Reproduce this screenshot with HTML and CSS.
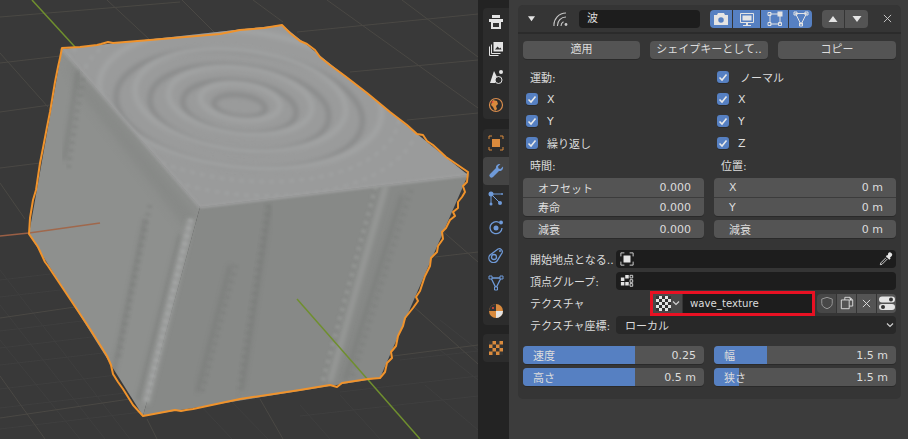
FILE: index.html
```html
<!DOCTYPE html>
<html lang="ja">
<head>
<meta charset="utf-8">
<title>波モディファイアー</title>
<link rel="stylesheet" href="styles.css">
</head>
<body>
<div class="app">
  <svg class="viewport" viewBox="0 0 478 439" width="478" height="439" aria-hidden="true">
    <defs>
      <clipPath id="faceTop"><path d="M62 49 L282 25 L468 175 L200 207Z"/></clipPath>
      <clipPath id="faceLeft"><path d="M62 49 L200 207 L143 416 L29 234Z"/></clipPath>
      <clipPath id="faceRight"><path d="M200 207 L468 175 L380 378 L143 416Z"/></clipPath>
      <filter id="b1"><feGaussianBlur stdDeviation="1"/></filter>
      <filter id="b2"><feGaussianBlur stdDeviation="2"/></filter>
      <filter id="b4"><feGaussianBlur stdDeviation="4"/></filter>
    </defs>
    <rect class="vp-bg" width="478" height="439"/>
    <g class="grid-minor">
      <path d="M0 389 L200 365M0 408 L200 384M0 429 L200 405M0 348 L100 336M0 365 L120 351M0 331 L90 320M300 416 L478 396M340 392 L478 376M400 360 L478 351M0 280 L50 274M0 297 L60 290"/>
      <path d="M0 340 L80 439M0 305 L105 439M0 270 L130 439M200 405 L232 439M230 400 L268 439M300 405 L330 439M340 395 L380 439M425 385 L478 430M440 350 L478 380M440 320 L478 350"/>
    </g>
    <g class="grid-major">
      <path d="M0 17 L180 2M0 63 L60 56M0 112 L50 105M0 168 L40 163M0 318 L75 307M0 418 L130 399M297 32 L478 14M350 72 L478 60M407 120 L478 113M435 257 L478 252M393 356 L478 345"/>
      <path d="M107 0 L150 40M182 0 L215 33M0 53 L48 107M0 183 L25 219M253 0 L283 22M327 0 L478 108M402 0 L478 57M413 306 L478 364M440 229 L478 262M260 399 L283 439M0 376 L45 439M147 419 L157 439"/>
    </g>
    <path class="axis-green" d="M32 0 L75 47"/>
    <path class="face-top" d="M62 49 L282 25 L468 175 L200 207Z"/>
    <path class="face-left" d="M62 49 L200 207 L143 416 L29 234Z"/>
    <path class="face-right" d="M200 207 L468 175 L380 378 L143 416Z"/>

    <g clip-path="url(#faceTop)">
      <g transform="rotate(7 240 103)">
        <g class="ring-dark" filter="url(#b2)">
          <ellipse cx="240" cy="106" rx="26" ry="11"/>
          <ellipse cx="240" cy="107" rx="57" ry="26"/>
          <ellipse cx="240" cy="108" rx="90" ry="42"/>
          <ellipse cx="240" cy="109" rx="124" ry="58"/>
        </g>
        <g class="ring-light" filter="url(#b2)">
          <ellipse cx="240" cy="102" rx="40" ry="18"/>
          <ellipse cx="240" cy="101" rx="72" ry="33"/>
          <ellipse cx="240" cy="100" rx="106" ry="50"/>
          <ellipse cx="240" cy="99" rx="142" ry="68"/>
        </g>
        <g class="ring-dot" filter="url(#b1)">
          <ellipse cx="240" cy="100" rx="160" ry="80"/>
          <ellipse cx="240" cy="100" rx="180" ry="94"/>
        </g>
      </g>
    </g>
    <path class="edge-light" d="M62 49 L200 207" filter="url(#b1)"/>
    <path class="edge-light" d="M200 207 L468 175" filter="url(#b1)"/>

    <g clip-path="url(#faceLeft)">
      <path class="shade-dark" d="M66 58 L196 214 L190 235 L78 90Z" filter="url(#b4)"/>
      <path class="band-dark" d="M78 70 L64 160" filter="url(#b2)"/>
      <path class="band-dotted" d="M84 70 L68 170" filter="url(#b1)"/>
      <path class="band-dark" d="M145 219 L113 375" filter="url(#b2)"/>
      <path class="band-dotted" d="M150 205 L118 360" filter="url(#b1)"/>
    </g>
    <path class="band-dark" d="M180 235 L138 400" filter="url(#b2)"/>
    <path class="band-light" d="M191 219 L146 403" filter="url(#b2)"/>
    <path class="band-chevron" d="M191 219 L146 403" filter="url(#b1)"/>
    <g clip-path="url(#faceRight)">
      <path class="band-dark" d="M230 265 L197 392" filter="url(#b2)"/>
      <path class="band-dotted" d="M236 265 L202 392" filter="url(#b1)"/>
      <path class="band-dotted" d="M268 205 L238 395" filter="url(#b1)"/>
      <path class="band-dark" d="M270 205 L242 390" filter="url(#b2)"/>
      <path class="band-soft" d="M386 185 L330 382" filter="url(#b2)"/>
      <path class="band-dark" d="M402 195 L345 380" filter="url(#b2)"/>
      <path class="band-dotted" d="M411 190 L352 378" filter="url(#b1)"/>
      <path class="band-chevron-soft" d="M376 186 L322 384" filter="url(#b1)"/>
    </g>

    <path class="axis-red" d="M0 236 L29 233"/>
    <path class="axis-red-in" d="M29 233 L100 223"/>
    <path class="axis-green" d="M297 299 L420 439"/>
    <path class="outline" d="M62 48 L80 47 L97 45 L101 44 L108 42 L113 43 L150 40 L220 34 L240 30 L264 28 L282 25 L290 33 L300 41 L307 44 L315 50 L320 57 L330 65 L345 76 L367 93 L390 112 L407 125 L417 134 L423 135 L427 141 L433 145 L446 157 L468 172 L467 182 L463 186 L465 192 L462 197 L458 202 L458 208 L453 212 L455 216 L450 220 L446 228 L442 232 L443 239 L438 246 L437 252 L431 258 L430 266 L425 276 L420 291 L416 297 L418 301 L413 308 L405 318 L403 326 L398 336 L396 346 L391 352 L392 358 L387 363 L385 372 L380 378 L368 379 L355 381 L342 383 L337 387 L330 385 L300 390 L240 399 L193 409 L186 410 L181 411 L175 410 L143 416 L133 405 L123 389 L118 382 L113 374 L111 365 L107 356 L90 329 L72 302 L48 266 L45 262 L38 247 L29 234 L30 218 L33 200 L36 190 L40 163 L43 148 L47 127 L50 112 L52 100 L55 82 L58 67 L60 58Z"/>
  </svg>

  <nav class="tabs" aria-label="プロパティタブ">
    <div class="tab-group top-group">
      <div class="tab">
        <svg viewBox="0 0 16 16"><path class="i-white" d="M4 1h8v3H4zM1 5h14v3h-2v7H3V8H1z"/><path class="i-dark" d="M5 9h6v4H5z"/></svg>
      </div>
      <div class="tab">
        <svg viewBox="0 0 16 16"><path class="i-line" d="M1.500 5.500v9h9M3.500 3.500v9h9"/><path class="i-white" d="M5.500 1h9.500v9.500H5.500z"/><path class="i-dark" d="M7 8.500l2.500-3 2 2 1-1 1 2z"/></svg>
      </div>
      <div class="tab">
        <svg viewBox="0 0 16 16"><path class="i-white" d="M6 2L10 10L7 14H2z"/><circle class="i-white" cx="13" cy="3" r="2"/><circle class="i-ring" cx="10.500" cy="11" r="3.500"/></svg>
      </div>
      <div class="tab">
        <svg viewBox="0 0 16 16"><circle class="i-world" cx="8" cy="8" r="6.500"/><path class="i-orange" d="M5 3l4 1 1 3-2 2 1 3-2 2-2-4-2-2 1-3z"/><circle class="i-redspot" cx="4.500" cy="5" r="1"/></svg>
      </div>
    </div>
    <div class="tab-group">
      <div class="tab">
        <svg viewBox="0 0 16 16"><path class="i-o-line" d="M1 4V1h3M12 1h3v3M15 12v3h-3M4 15H1v-3"/><path class="i-orange" d="M4 4h8v8H4z"/></svg>
      </div>
      <div class="tab tab-active">
        <svg viewBox="0 0 16 16"><path class="i-blue" d="M15 3.500c.6 2.500-1.400 5-4 4.500L5 14a2.100 2.100 0 0 1-3-3l6-6c-.500-2.600 2-4.600 4.500-4L10 3.500 10.500 5.500 12.500 6z"/></svg>
      </div>
      <div class="tab">
        <svg viewBox="0 0 16 16"><circle class="i-blue" cx="3" cy="3" r="2.500"/><circle class="i-blue" cx="3" cy="13" r="1.500"/><circle class="i-blue" cx="12" cy="12" r="2"/><circle class="i-blue" cx="14" cy="3" r="1"/><path class="i-b-line" d="M3 3h10M3 3v9M3 3l8 8"/></svg>
      </div>
      <div class="tab">
        <svg viewBox="0 0 16 16"><path class="i-b-line wide" d="M11 3.500A6 6 0 1 0 14 9"/><circle class="i-blue" cx="8" cy="9" r="2.500"/><circle class="i-blue" cx="13" cy="3.500" r="2"/></svg>
      </div>
      <div class="tab">
        <svg viewBox="0 0 16 16"><path class="i-b-line wide" d="M2 8L10 2a3 3 0 0 1 4 4L9 14a4 4 0 0 1-7-6z"/><circle class="i-b-line wide" cx="6" cy="10" r="2.500"/><circle class="i-blue" cx="12" cy="4" r="1"/></svg>
      </div>
      <div class="tab">
        <svg viewBox="0 0 16 16"><path class="i-b-line wide" d="M3 3h10L8 13z"/><path class="i-box" d="M1 1h3v3H1zM12 1h3v3h-3zM6.500 12h3v3h-3z"/></svg>
      </div>
      <div class="tab">
        <svg viewBox="0 0 16 16"><circle class="i-orange" cx="8" cy="8" r="7"/><path class="i-dark" d="M8 8V1A7 7 0 0 0 1 8z"/><path class="i-white" d="M8 8h7A7 7 0 0 1 8 15z"/><circle class="i-redspot" cx="5" cy="5" r="1"/></svg>
      </div>
    </div>
    <div class="tab-group">
      <div class="tab">
        <svg viewBox="0 0 16 16"><path class="i-orange" d="M1 1h14v14H1z"/><path class="i-dark" d="M1 1h3.500v3.500H1zM8 1h3.500v3.500H8zM4.500 4.500H8V8H4.500zM11.500 4.500H15V8h-3.500zM1 8h3.500v3.500H1zM8 8h3.500v3.500H8zM4.500 11.500H8V15H4.500zM11.500 11.500H15V15h-3.500z"/></svg>
      </div>
    </div>
  </nav>

  <main class="editor">
    <section class="panel">
      <header class="panel-head">
        <svg class="caret" viewBox="0 0 8 8"><path d="M0 1.500h8L4 7z"/></svg>
        <svg class="wave-icon" viewBox="0 0 16 16"><path d="M1 15A12 12 0 0 1 13 2M4.500 15A8.500 8.500 0 0 1 13 6M8 15a5 5 0 0 1 2.500-4.300"/><circle cx="13" cy="13.500" r="1.400"/></svg>
        <div class="name-field">波</div>
        <div class="toggles">
          <span class="toggle t-cam"><svg viewBox="0 0 16 16"><path class="i-white" d="M5 2h6l1 2h3v10H1V4h3z"/><circle class="i-ring-blue" cx="8" cy="9" r="3.500"/></svg></span>
          <span class="toggle t-wide"><svg viewBox="0 0 16 16"><path class="i-line" d="M1.500 2.500h13v9h-13z"/><path class="i-white" d="M3.500 4.500h9v5h-9zM7 12h2v2h3v1H4v-1h3z"/></svg></span>
          <span class="toggle t-wide"><svg viewBox="0 0 16 16"><path class="i-line" d="M3 3h9M3 3v9M13 4v9M3 13h9"/><path class="i-white" d="M10.500 .5h5v5h-5z"/><path class="i-box-w" d="M1 1.500h3v3H1zM1 11.500h3v3H1zM11.500 11.500h3v3h-3z"/></svg></span>
          <span class="toggle t-cage"><svg viewBox="0 0 16 16"><path class="i-line" d="M2.500 2.500h11L8 13.500z"/><path class="i-box-w" d="M1 1h3v3H1zM12 1h3v3h-3zM6.500 12h3v3h-3z"/></svg></span>
        </div>
        <div class="updown">
          <span class="ud"><svg viewBox="0 0 10 8"><path d="M5 1l4.500 6H.5z"/></svg></span>
          <span class="ud"><svg viewBox="0 0 10 8"><path d="M.5 1h9L5 7z"/></svg></span>
        </div>
        <svg class="close" viewBox="0 0 10 10"><path d="M1 1l8 8M9 1l-8 8"/></svg>
      </header>

      <div class="body">
        <div class="btn-row">
          <button class="btn">適用</button>
          <button class="btn">シェイプキーとして..</button>
          <button class="btn">コピー</button>
        </div>

        <div class="columns">
          <div class="col">
            <div class="line label">運動:</div>
            <label class="line check"><span class="box"><svg viewBox="0 0 12 12"><path d="M2.500 6.500l2.500 2.500 4.500-5.500"/></svg></span>X</label>
            <label class="line check"><span class="box"><svg viewBox="0 0 12 12"><path d="M2.500 6.500l2.500 2.500 4.500-5.500"/></svg></span>Y</label>
            <label class="line check"><span class="box"><svg viewBox="0 0 12 12"><path d="M2.500 6.500l2.500 2.500 4.500-5.500"/></svg></span>繰り返し</label>
            <div class="line label">時間:</div>
            <div class="fields">
              <div class="field"><span>オフセット</span><span>0.000</span></div>
              <div class="field"><span>寿命</span><span>0.000</span></div>
            </div>
            <div class="field solo"><span>減衰</span><span>0.000</span></div>
          </div>
          <div class="col col-right">
            <label class="line check"><span class="box"><svg viewBox="0 0 12 12"><path d="M2.500 6.500l2.500 2.500 4.500-5.500"/></svg></span><span class="pad2">ノーマル</span></label>
            <label class="line check"><span class="box"><svg viewBox="0 0 12 12"><path d="M2.500 6.500l2.500 2.500 4.500-5.500"/></svg></span>X</label>
            <label class="line check"><span class="box"><svg viewBox="0 0 12 12"><path d="M2.500 6.500l2.500 2.500 4.500-5.500"/></svg></span>Y</label>
            <label class="line check"><span class="box"><svg viewBox="0 0 12 12"><path d="M2.500 6.500l2.500 2.500 4.500-5.500"/></svg></span>Z</label>
            <div class="line label">位置:</div>
            <div class="fields">
              <div class="field"><span>X</span><span>0 m</span></div>
              <div class="field"><span>Y</span><span>0 m</span></div>
            </div>
            <div class="field solo"><span>減衰</span><span>0 m</span></div>
          </div>
        </div>

        <div class="props">
          <div class="prop">
            <span class="prop-label">開始地点となる..</span>
            <div class="input">
              <svg class="obj-icon" viewBox="0 0 16 16"><path class="i-line" d="M1 5V1h4M11 1h4v4M15 11v4h-4M5 15H1v-4"/><path class="i-white" d="M4 4h8v8H4z"/></svg>
              <svg class="dropper" viewBox="0 0 16 16"><path class="i-white" d="M10.500 1.500a2.500 2.500 0 0 1 4 3L12.500 6.500l.8.800-1.500 1.500-4-4L9.300 3.300l.8.800z"/><path class="i-line" d="M8 6.500L2 12.500 1.500 14.500 3.500 14 9.500 8"/></svg>
            </div>
          </div>
          <div class="prop">
            <span class="prop-label">頂点グループ:</span>
            <div class="input">
              <svg class="obj-icon" viewBox="0 0 16 16"><path class="i-white" d="M1 4h4v4H1zM1 9h4v4H1zM6 9h4v4H6zM6 1h4v4H6z"/><path class="i-box-w" d="M11.500 1.500h3v3h-3zM11.500 6.500h3v3h-3zM11.500 11h3v3h-3z"/></svg>
            </div>
          </div>
          <div class="prop">
            <span class="prop-label tex-label">テクスチャ</span>
            <div class="tex-select">
              <span class="tex-icon">
                <svg viewBox="0 0 15 15"><path class="i-white" d="M0 0h15v15H0z"/><path class="i-check" d="M0 0h3v3H0zM6 0h3v3H6zM12 0h3v3h-3zM3 3h3v3H3zM9 3h3v3H9zM0 6h3v3H0zM6 6h3v3H6zM12 6h3v3h-3zM3 9h3v3H3zM9 9h3v3H9zM0 12h3v3H0zM6 12h3v3H6zM12 12h3v3h-3z"/></svg>
                <svg class="chev" viewBox="0 0 8 8"><path d="M1 2.500l3 3 3-3"/></svg>
              </span>
              <span class="tex-name">wave_texture</span>
            </div>
            <div class="tex-tools">
              <span class="tool"><svg viewBox="0 0 16 16"><path class="i-line dim" d="M8 1.500l6 2v5c0 3-3 5-6 6-3-1-6-3-6-6v-5z"/></svg></span>
              <span class="tool"><svg viewBox="0 0 16 16"><path class="i-line" d="M5.500 4.500V1.500h6l3 3v7h-4M1.500 4.500h9v10h-9z"/><path class="i-white" d="M11 1.500l3.500 3.500H11z"/></svg></span>
              <span class="tool"><svg viewBox="0 0 10 10"><path class="i-line" d="M1 1l8 8M9 1l-8 8"/></svg></span>
              <span class="tool"><svg viewBox="0 0 16 16"><path class="i-white" d="M3 1.500h10a3 3 0 0 1 0 6H3a3 3 0 0 1 0-6zM3 9h10a3 3 0 0 1 0 6H3a3 3 0 0 1 0-6z"/><circle class="i-dark" cx="12" cy="4.500" r="2"/><circle class="i-dark" cx="4" cy="12" r="2"/></svg></span>
            </div>
          </div>
          <div class="prop">
            <span class="prop-label">テクスチャ座標:</span>
            <div class="select"><span>ローカル</span><svg class="chev" viewBox="0 0 8 8"><path d="M1 2.500l3 3 3-3"/></svg></div>
          </div>
        </div>

        <div class="sliders">
          <div class="slider"><i class="fill" style="width:112px"></i><span>速度</span><span>0.25</span></div>
          <div class="slider"><i class="fill" style="width:53px"></i><span>幅</span><span>1.5 m</span></div>
          <div class="slider"><i class="fill" style="width:112px"></i><span>高さ</span><span>0.5 m</span></div>
          <div class="slider"><i class="fill" style="width:25px"></i><span>狭さ</span><span>1.5 m</span></div>
        </div>
      </div>
    </section>
  </main>
</div>
</body>
</html>
```

FILE: styles.css
```css
* { box-sizing: border-box; }
html, body { margin: 0; height: 100%; overflow: hidden; }
body {
  font-family: "DejaVu Sans", "Noto Sans CJK JP", sans-serif;
  font-size: 11px;
  color: #dcdcdc;
  background: #3a3a3a;
}
.app { display: flex; width: 908px; height: 439px; }

/* viewport */
.viewport { display: block; flex: none; }
.vp-bg { fill: #393939; }
.grid-minor path { fill: none; stroke: #3f3f3f; stroke-width: 1; }
.grid-major path { fill: none; stroke: #4a4844; stroke-width: 1; }
.axis-green { fill: none; stroke: #6f8f2e; stroke-width: 1.5; }
.axis-red { fill: none; stroke: #9a5f45; stroke-width: 1.5; }
.axis-red-in { fill: none; stroke: #a0684c; stroke-width: 1.5; }
.face-top { fill: #9a9b9b; }
.face-left { fill: #8e908e; }
.face-right { fill: #878987; }
.ring-dark ellipse { fill: none; stroke: #8a8b8b; stroke-width: 5; }
.ring-light ellipse { fill: none; stroke: #a3a4a4; stroke-width: 5; }
.ring-dot ellipse { fill: none; stroke: #a2a3a3; stroke-width: 4; stroke-dasharray: 5 5; opacity: .5; }
.edge-light { fill: none; stroke: #9e9f9f; stroke-width: 3; }
.shade-dark { fill: #828482; opacity: .5; }
.band-dark { fill: none; stroke: #757775; stroke-width: 4; opacity: .5; }
.band-light { fill: none; stroke: #9c9e9d; stroke-width: 7; }
.band-soft { fill: none; stroke: #969896; stroke-width: 6; }
.band-dotted { fill: none; stroke: #787a78; stroke-width: 5; stroke-dasharray: 3 5; opacity: .35; }
.band-chevron { fill: none; stroke: #a9abaa; stroke-width: 5; stroke-dasharray: 3 5; opacity: .55; }
.band-chevron-soft { fill: none; stroke: #9a9c9a; stroke-width: 5; stroke-dasharray: 4 5; opacity: .55; }
.outline { fill: none; stroke: #f0932c; stroke-width: 2; stroke-linejoin: round; }

/* tab strip */
.tabs {
  flex: none;
  width: 31px;
  background: #232323;
  padding-left: 5px;
  display: flex;
  flex-direction: column;
}
.tab-group { background: #2c2c2c; border-radius: 4px 0 0 4px; margin-bottom: 9px; }
.top-group { margin-top: 8px; margin-bottom: 10px; }
.tab { height: 28px; padding-right: 1px; display: flex; align-items: center; justify-content: center; }
.top-group .tab { height: 27.67px; }
.tab svg { width: 16px; height: 16px; }
.tab-active { background: #444; border-radius: 4px 0 0 4px; }

/* icon paint */
.i-white { fill: #e4e4e4; }
.i-dark { fill: #333; }
.i-line { fill: none; stroke: #e4e4e4; stroke-width: 1; }
.i-line.dim { stroke: #a0a0a0; }
.i-ring { fill: #2c2c2c; stroke: #e4e4e4; stroke-width: 1; }
.i-ring-blue { fill: #5680c2; stroke: #e4e4e4; stroke-width: 1.5; }
.i-world { fill: #2c2c2c; stroke: #d98d4d; stroke-width: 1.2; }
.i-orange { fill: #d98a3d; }
.i-o-line { fill: none; stroke: #d98a3d; stroke-width: 1; }
.i-redspot { fill: #e84a3a; }
.i-blue { fill: #6f9ad8; }
.i-b-line { fill: none; stroke: #6f9ad8; stroke-width: 1; }
.i-b-line.wide { stroke-width: 1.3; }
.i-box { fill: #2c2c2c; stroke: #6f9ad8; stroke-width: 1; }
.i-box-w { fill: none; stroke: #e4e4e4; stroke-width: 1; }
.i-check { fill: #333; }

/* properties editor */
.editor { flex: 1; padding: 5px 7px 0 9px; background: #3c3c3c; }
.panel { width: 383px; height: 394px; background: #353535; border-radius: 5px; }
.panel-head {
  height: 29px;
  border-bottom: 2px solid #2b2b2b;
  display: flex;
  align-items: center;
}
.caret { width: 7px; height: 7px; margin-left: 10px; fill: #e4e4e4; flex: none; }
.wave-icon { width: 16px; height: 16px; margin-left: 18px; flex: none; fill: #c8c8c8; }
.wave-icon path { fill: none; stroke: #c8c8c8; stroke-width: 1.1; }
.name-field {
  width: 121px; height: 18px; margin-left: 10px; flex: none;
  background: #1d1d1d; border-radius: 4px;
  padding-left: 8px; line-height: 18px;
}
.toggles { display: flex; gap: 1px; margin-left: 10px; flex: none; }
.toggle { height: 18px; background: #5680c2; display: flex; align-items: center; justify-content: center; }
.toggle svg { width: 16px; height: 16px; }
.t-cam { width: 22px; border-radius: 4px 0 0 4px; }
.t-wide { width: 27px; }
.t-cage { width: 23px; border-radius: 0 4px 4px 0; }
.updown { display: flex; gap: 1px; margin-left: 10px; flex: none; }
.ud { width: 22px; height: 18px; background: #545454; display: flex; align-items: center; justify-content: center; }
.ud:first-child { border-radius: 4px 0 0 4px; }
.ud:last-child { width: 23px; border-radius: 0 4px 4px 0; }
.ud svg { width: 10px; height: 8px; fill: #e4e4e4; }
.close { width: 9px; height: 9px; margin-left: 15px; flex: none; fill: none; stroke: #d0d0d0; stroke-width: 1; }

.body { padding: 0 5px; }
.btn-row { display: grid; grid-template-columns: 117px 118px 118px; column-gap: 10px; padding-top: 7px; }
.btn {
  height: 18px; padding: 0; border: 0; border-radius: 4px;
  background: #545454; color: #dcdcdc;
  font: inherit; line-height: 18px;
  box-shadow: 0 1px 0 #2a2a2a;
}
.columns { display: grid; grid-template-columns: 181px 182px; column-gap: 10px; padding-top: 7px; }
.line { height: 22px; display: flex; align-items: center; }
.label { padding-left: 7px; }
.check { padding-left: 3px; }
.pad2 { padding-left: 2px; }
.box {
  width: 12px; height: 12px; margin-right: 9px; flex: none;
  background: #5680c2; border-radius: 3px;
  box-shadow: 0 1px 0 #2a2a2a;
}
.box svg { display: block; width: 12px; height: 12px; fill: none; stroke: #e8e8e8; stroke-width: 1.6; }
.fields { margin-top: 2px; border-radius: 4px; overflow: hidden; box-shadow: 0 1px 0 #2a2a2a; display: flex; flex-direction: column; }
.field {
  height: 19px; background: #545454;
  display: flex; justify-content: space-between; align-items: center;
  padding: 0 13px 0 15px;
}
.fields .field + .field { border-top: 1px solid #3c3c3c; }
.field.solo { height: 18px; margin-top: 4px; border-radius: 4px; box-shadow: 0 1px 0 #2a2a2a; }

.props { display: flex; flex-direction: column; gap: 4px; padding-top: 12px; }
.prop { height: 18px; display: flex; align-items: center; }
.prop-label { width: 93px; padding-left: 7px; flex: none; white-space: nowrap; }
.tex-label { width: 130px; }
.input {
  flex: 1; height: 18px; background: #1d1d1d; border-radius: 4px;
  display: flex; align-items: center; justify-content: space-between; padding: 0 3px 0 4px;
}
.obj-icon { width: 14px; height: 14px; flex: none; }
.dropper { width: 14px; height: 14px; flex: none; }
.tex-select { display: flex; width: 159px; height: 19px; gap: 1px; outline: 3px solid #e81123; flex: none; }
.tex-icon { width: 29px; background: #484848; display: flex; align-items: center; gap: 1px; padding-left: 3px; flex: none; }
.tex-icon svg { width: 15px; height: 15px; flex: none; }
.tex-icon .chev { width: 8px; height: 8px; }
.chev { fill: none; stroke: #d0d0d0; stroke-width: 1.2; flex: none; width: 8px; height: 8px; }
.tex-name { flex: 1; background: #1d1d1d; padding-left: 7px; line-height: 19px; font-size: 10.2px; }
.tex-tools { display: flex; gap: 1px; margin-left: 5px; flex: none; }
.tool { width: 19px; height: 19px; background: #545454; display: flex; align-items: center; justify-content: center; }
.tool:first-child { background: #474747; border-radius: 4px 0 0 4px; }
.tool:last-child { border-radius: 0 4px 4px 0; }
.tool svg { width: 14px; height: 14px; }
.tool:nth-child(3) svg { width: 9px; height: 9px; }
.tool:last-child svg { width: 16px; height: 16px; }
.select {
  flex: 1; height: 18px; background: #282828; border-radius: 4px;
  display: flex; align-items: center; justify-content: space-between;
  padding: 0 2px 0 9px;
}
.sliders { display: grid; grid-template-columns: 181px 182px; column-gap: 10px; row-gap: 4px; padding-top: 12px; }
.slider {
  position: relative; height: 18px; background: #545454; border-radius: 4px; overflow: hidden;
  display: flex; justify-content: space-between; align-items: center;
  padding: 0 8px 0 10px;
  box-shadow: 0 1px 0 #2a2a2a;
}
.slider span { position: relative; }
.fill { position: absolute; left: 0; top: 0; bottom: 0; background: #5680c2; }
```
